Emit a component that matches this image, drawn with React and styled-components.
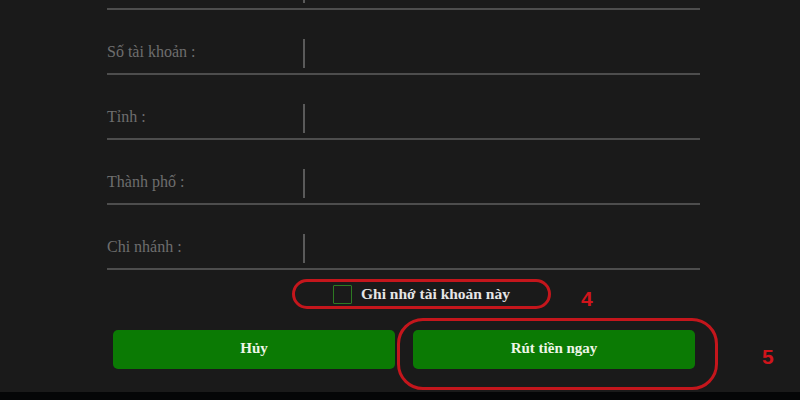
import React from 'react'
import styled, { createGlobalStyle } from 'styled-components'

const GlobalStyle = createGlobalStyle`
	html, body {
		margin: 0;
		padding: 0;
		background: #1a1a1a;
		overflow: hidden;
	}
	body {
		font-family: "Liberation Serif", "Times New Roman", serif;
	}
`

const fields = ['', 'Số tài khoản :', 'Tỉnh :', 'Thành phố :', 'Chi nhánh :']

const App = () => {
	return (
		<Screen>
			<GlobalStyle />
			<Form>
				{fields.map((label, i) => (
					<Row key={i}>
						<Label>{label}</Label>
						<Divider />
					</Row>
				))}
			</Form>

			<RememberRow>
				<Remember>
					<Box />
					<RememberText>Ghi nhớ tài khoản này</RememberText>
				</Remember>
				<Step offset={30} drop={8}>4</Step>
			</RememberRow>

			<Buttons>
				<Button>Hủy</Button>
				<Marked>
					<Button>Rút tiền ngay</Button>
					<Ring />
				</Marked>
				<Step offset={49} drop={15}>5</Step>
			</Buttons>

			<BottomBar />
		</Screen>
	)
}

const Screen = styled.div`
	width: 800px;
	height: 400px;
	display: flex;
	flex-direction: column;
	background: #1a1a1a;
	overflow: hidden;
`

const Form = styled.div`
	width: 593px;
	margin-left: 107px;
	margin-top: -55px;
	display: flex;
	flex-direction: column;
`

const Row = styled.div`
	height: 63px;
	display: flex;
	align-items: flex-end;
	border-bottom: 2px solid #4d4d4d;
	box-sizing: content-box;
`

const Label = styled.div`
	width: 196px;
	font-size: 16px;
	color: #6e6e6e;
	padding-bottom: 12px;
`

const Divider = styled.div`
	width: 2px;
	height: 29px;
	margin-bottom: 5px;
	background: #5a5a5a;
`

const RememberRow = styled.div`
	display: flex;
	align-items: flex-start;
	margin-top: 9px;
	padding-left: 292px;
	height: 30px;
`

const Remember = styled.div`
	width: 253px;
	height: 24px;
	border: 3px solid #c4161c;
	border-radius: 16px;
	display: flex;
	align-items: center;
	justify-content: center;
	gap: 9px;
`

const Box = styled.div`
	width: 17px;
	height: 17px;
	border: 1.5px solid #2d7a22;
	border-radius: 1px;
	margin-top: 1px;
`

const RememberText = styled.span`
	font-size: 15.5px;
	font-weight: bold;
	color: #e6e6e6;
`

const Step = styled.div`
	font-family: "Liberation Sans", Arial, sans-serif;
	font-weight: bold;
	font-size: 21px;
	color: #d0141b;
	margin-left: ${p => p.offset}px;
	margin-top: ${p => p.drop}px;
`

const Buttons = styled.div`
	display: flex;
	align-items: flex-start;
	margin-top: 21px;
	padding-left: 113px;
	gap: 18px;
`

const Button = styled.button`
	width: 282px;
	height: 39px;
	border: none;
	border-radius: 5px;
	background: #0b7a04;
	color: #eef6e8;
	font-family: "Liberation Serif", "Times New Roman", serif;
	font-weight: bold;
	font-size: 15px;
	padding: 0;
	padding-bottom: 2px;
`

const Marked = styled.div`
	position: relative;
	display: flex;
`

const Ring = styled.div`
	position: absolute;
	top: -12px;
	left: -16px;
	right: -23px;
	bottom: -21px;
	border: 3px solid #c4161c;
	border-radius: 26px;
	pointer-events: none;
`

const BottomBar = styled.div`
	margin-top: auto;
	height: 8px;
	background: #050607;
`

export default App
